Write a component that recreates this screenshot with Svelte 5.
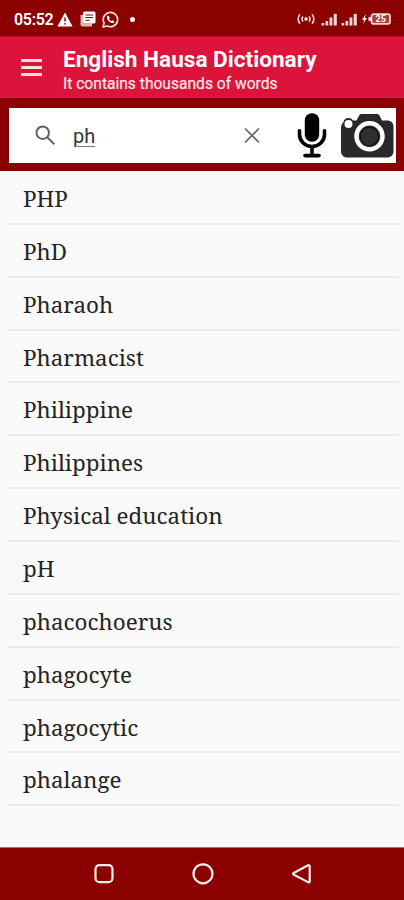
<script lang="ts">
	const words = [
		'PHP',
		'PhD',
		'Pharaoh',
		'Pharmacist',
		'Philippine',
		'Philippines',
		'Physical education',
		'pH',
		'phacochoerus',
		'phagocyte',
		'phagocytic',
		'phalange'
	];

	let query = $state('ph');
</script>

<div class="screen">
	<div class="status">
		<span class="time">05:52</span>
		<svg class="warning" width="16" height="15" viewBox="0 0 16 15">
			<path d="M8 0.5 15.6 14.5H0.4z" fill="#fff" />
			<path d="M8 5.5v4M8 11v1.6" stroke="#8b0000" stroke-width="1.5" />
		</svg>
		<svg class="news" width="16" height="16" viewBox="0 0 16 16">
			<path d="M0.5 4v9.5a2 2 0 0 0 2 2H12v-3H3.5V4z" fill="#e3b6b4" />
			<rect x="3" y="0.5" width="12.5" height="12" rx="1.5" fill="#fff" />
			<path d="M5.5 4h7.5M5.5 6.5h7.5" stroke="#8b0000" stroke-width="1.2" />
			<path d="M5.5 9.3h4" stroke="#8b0000" stroke-width="1" />
		</svg>
		<svg class="whatsapp" width="17" height="17" viewBox="0 0 17 17">
			<path
				d="M1 16l1.1-4A7.2 7.2 0 1 1 5 14.9z"
				fill="none"
				stroke="#f8e4e2"
				stroke-width="1.6"
				stroke-linejoin="round"
			/>
			<path
				d="M6.2 4.6c-.9.3-1.5 1.2-1.2 2.3.7 2.5 2.5 4.3 4.9 5.1 1.2.3 2.3-.5 2.4-1.6l-2-1.1-1 .9c-1.1-.5-1.9-1.3-2.3-2.3l.8-.9z"
				fill="#fff"
			/>
		</svg>
		<span class="dot"></span>
		<span class="spacer"></span>
		<svg class="hotspot" width="18" height="12" viewBox="0 0 18 12">
			<path d="M3 1.2Q-0.7 6 3 10.8M6 3.4Q4 6 6 8.6M12 3.4Q14 6 12 8.6M15 1.2Q18.7 6 15 10.8" />
			<circle cx="9" cy="6" r="1.7" />
		</svg>
		<div class="signals">
			{#each [0, 1] as sim (sim)}
				<svg width="17" height="13" viewBox="0 0 17 13">
					<rect x="0.5" y="10" width="2.7" height="2.5" />
					<rect x="4.5" y="8" width="2.7" height="4.5" />
					<rect x="8.5" y="4.5" width="2.9" height="8" />
					<rect x="12.7" y="0.8" width="3.1" height="11.7" />
				</svg>
			{/each}
		</div>
		<svg class="battery" width="30" height="12" viewBox="0 0 30 12">
			<path d="M5 1 1 6.7h2.3L2 11l4-6H3.8z" />
			<path d="M7.5 4.2H10v3.6H7.5z" />
			<rect x="10.5" y="1.2" width="18.5" height="9.6" rx="2" />
			<text x="19.7" y="9.2" text-anchor="middle">25</text>
		</svg>
	</div>

	<header>
		<button class="menu" aria-label="Menu"><i></i><i></i><i></i></button>
		<div class="titles">
			<h1>English Hausa Dictionary</h1>
			<p>It contains thousands of words</p>
		</div>
	</header>

	<div class="search">
		<div class="box">
			<svg class="lens" width="21" height="21" viewBox="0 0 21 21">
				<circle cx="7.7" cy="7.7" r="6.2" />
				<path d="M12.4 12.4 19.3 19.3" />
			</svg>
			<span class="query">{query}</span>
			<button class="clear" aria-label="Clear" onclick={() => (query = '')}>
				<svg width="18" height="18" viewBox="0 0 18 18">
					<path d="M2 1.5 16 15.500M16 1.5 2 15.500" />
				</svg>
			</button>
			<button class="mic" aria-label="Voice search">
				<svg width="30" height="46" viewBox="0 0 30 46">
					<rect x="7.8" y="0.3" width="14.4" height="28.5" rx="7" />
					<path d="M2.5 17.8v3.7a12.5 12 0 0 0 25 0v-3.7M15 33.5v9" />
					<path d="M8 42.6h14" />
				</svg>
			</button>
			<button class="camera" aria-label="Camera search">
				<svg width="54" height="46" viewBox="0 0 54 46">
					<path
						d="M3.5 9C4 6 6 5 8.5 5c2 0 3.500.8 4.500 2.500h3.5L19 2.800c.6-1.200 1.400-1.800 2.800-1.800h15c1.400 0 2.200.6 2.800 1.800L42 7.500h5.500c3.500 0 6 2.500 6 6V38c0 4-2.500 6.500-6.500 6.500H7.500c-4 0-6.500-2.500-6.500-6.500V15c0-2.500 1-4.500 2.500-6z"
						fill="#29292b"
					/>
					<circle cx="8.500" cy="11" r="4" fill="#fff" />
					<circle cx="29.500" cy="23.300" r="13" fill="#303032" stroke="#fff" stroke-width="4.500" />
					<circle cx="29.500" cy="23.300" r="9.200" fill="#2f2f31" stroke="#111" stroke-width="1.200" />
				</svg>
			</button>
		</div>
	</div>

	<ul>
		{#each words as word (word)}
			<li>{word}</li>
		{/each}
	</ul>

	<nav>
		<svg width="22" height="22" viewBox="0 0 22 22">
			<rect x="2.5" y="2.2" width="17" height="17" rx="4" />
		</svg>
		<svg width="22" height="22" viewBox="0 0 22 22">
			<circle cx="11" cy="10.8" r="9.5" />
		</svg>
		<svg width="22" height="22" viewBox="0 0 22 22">
			<path d="M2.7 10 17 2.3Q18.7 1.8 18.7 3.4V18.2Q18.7 19.8 17 19.1L2.7 11.6Q1.500 10.800 2.700 10z" />
		</svg>
	</nav>
</div>

<style>
	:global(body) {
		margin: 0;
	}

	.screen {
		width: 404px;
		height: 900px;
		display: flex;
		flex-direction: column;
		background: #fafafa;
		font-family: Roboto, sans-serif;
		overflow: hidden;
	}

	button {
		padding: 0;
		border: none;
		background: none;
		display: flex;
	}

	.status {
		height: 36px;
		flex: none;
		box-sizing: border-box;
		padding: 2px 13px 0 14px;
		display: flex;
		align-items: center;
		background: #8b0000;
		color: #fff;
	}

	.time {
		width: 43px;
		font-size: 16px;
		font-weight: 600;
		letter-spacing: -0.3px;
	}

	.news {
		margin-left: 7px;
	}

	.whatsapp {
		margin-left: 6px;
	}

	.dot {
		width: 5px;
		height: 5px;
		margin-left: 11px;
		border-radius: 50%;
		background: #fff;
	}

	.spacer {
		flex: 1;
	}

	.hotspot {
		fill: none;
		stroke: #f3d5d3;
		stroke-width: 1.6;
	}

	.hotspot circle {
		fill: #fff;
		stroke: none;
	}

	.signals {
		margin-left: 6px;
		display: flex;
		gap: 3px;
		fill: #f3d5d3;
	}

	.battery {
		margin-left: 3px;
		fill: #fff;
	}

	.battery rect {
		fill: #a04340;
		stroke: #f3d5d3;
		stroke-width: 1.8;
	}

	.battery text {
		font-size: 9px;
		font-weight: 700;
	}

	header {
		height: 62px;
		flex: none;
		display: flex;
		background: #dc143c;
		border-top: 1px solid #c20c2c;
		box-sizing: border-box;
		color: #fff;
	}

	.menu {
		width: 21px;
		margin: 22px 21px 0;
		flex-direction: column;
		gap: 4px;
	}

	.menu i {
		height: 3px;
		background: #ffe3e5;
	}

	h1 {
		margin: 9px 0 0;
		font-size: 22.6px;
		line-height: 27px;
		font-weight: 700;
		white-space: nowrap;
	}

	p {
		margin: 1px 0 0;
		font-size: 15.6px;
		line-height: 21px;
		-webkit-text-stroke: 0.2px #ffe9ea;
		color: #ffe9ea;
		white-space: nowrap;
	}

	.search {
		height: 73px;
		flex: none;
		box-sizing: border-box;
		padding: 10px 8px 8px 9px;
		background: #8b0000;
	}

	.box {
		height: 55px;
		display: flex;
		align-items: center;
		background: #fff;
	}

	.lens {
		margin-left: 26px;
		fill: none;
		stroke: #616161;
		stroke-width: 2;
	}

	.query {
		width: 154px;
		margin-left: 17px;
		font-size: 20px;
		color: #333;
		text-decoration: underline;
		text-decoration-color: #777;
		text-decoration-thickness: 1px;
		text-underline-offset: 3px;
	}

	.clear {
		margin-left: 16px;
		stroke: #666;
		stroke-width: 1.7;
	}

	.mic {
		margin-left: 36px;
	}

	.mic path {
		fill: none;
		stroke: #000;
		stroke-width: 3.6;
		stroke-linecap: round;
	}

	.camera {
		margin-left: 13px;
	}

	ul {
		flex: 1;
		margin: 0;
		padding: 1px 5px 0 7px;
		list-style: none;
	}

	li {
		height: 52.87px;
		box-sizing: border-box;
		padding-left: 16px;
		border-bottom: 2px solid #ebebeb;
		font-family: 'Noto Serif', 'DejaVu Serif Condensed', 'DejaVu Serif', serif;
		font-size: 22.4px;
		line-height: 53px;
		color: #252525;
		white-space: nowrap;
	}

	nav {
		height: 53px;
		flex: none;
		box-sizing: border-box;
		padding: 0 91px 0 93px;
		display: flex;
		align-items: center;
		justify-content: space-between;
		background: #8b0000;
		border-top: 1px solid #b56a66;
	}

	nav svg {
		fill: none;
		stroke: #fff0ef;
		stroke-width: 2.2;
	}
</style>
